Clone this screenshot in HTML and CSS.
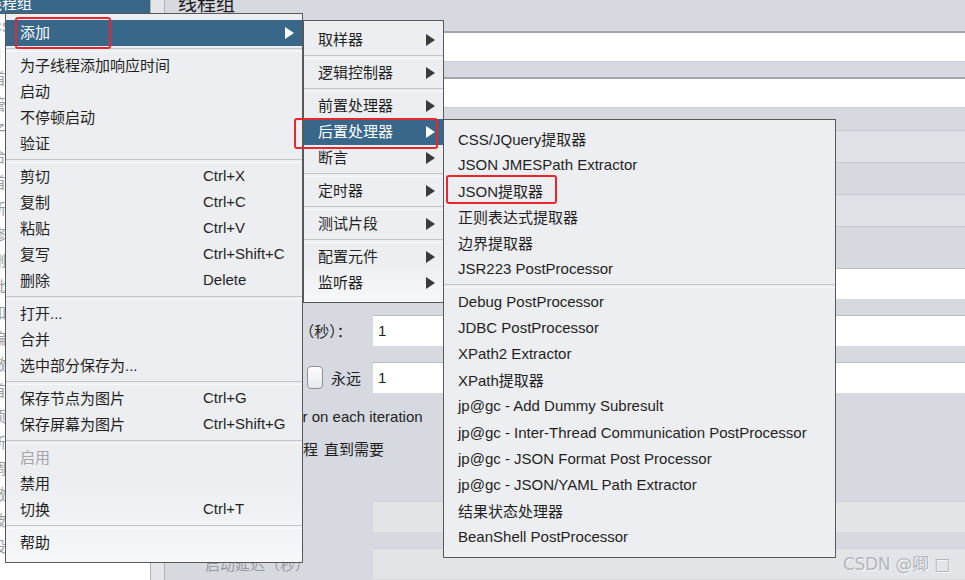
FILE: index.html
```html
<!DOCTYPE html>
<html lang="zh-CN">
<head>
<meta charset="utf-8">
<title>JMeter 线程组</title>
<link rel="stylesheet" href="styles.css">
</head>
<body>
<div class="app">
  <aside class="tree">
    <div class="tree-row selected"><span class="sel-text">线程组</span></div>
    <div class="tree-row">CSS</div>
    <div class="tree-row">□ 线</div>
    <div class="tree-row">首页</div>
    <div class="tree-row">管理</div>
    <div class="tree-row">子项</div>
    <div class="tree-row">合并</div>
    <div class="tree-row">首页</div>
    <div class="tree-row">新增</div>
    <div class="tree-row">修改</div>
    <div class="tree-row">删除</div>
    <div class="tree-row">批量</div>
    <div class="tree-row">加入</div>
    <div class="tree-row">编辑</div>
    <div class="tree-row">撤销</div>
    <div class="tree-row">首页</div>
    <div class="tree-row">项目</div>
    <div class="tree-row">新建</div>
    <div class="tree-row">调试</div>
    <div class="tree-row">撤回</div>
    <div class="tree-row">被真</div>
    <div class="tree-row">设贝</div>
  </aside>
  <div class="splitter"></div>
  <main class="panel">
    <div class="title-row"><h1 class="title">线程组</h1></div>
    <div class="field-row"></div>
    <div class="field-row second"></div>
    <div class="section">
      <div class="band light"></div>
      <div class="band"></div>
      <div class="band light"></div>
      <div class="band"></div>
    </div>
    <div class="props">
      <div class="prow"><span class="plabel">线程数：</span><span class="pfield">10</span></div>
      <div class="prow"><span class="plabel">Ramp-Up时间（秒）：</span><span class="pfield">1</span></div>
      <div class="prow"><span class="plabel split"><span>循环次数</span><span class="cbwrap"><span class="cb"></span><span>永远</span></span></span><span class="pfield">1</span></div>
      <div class="crow first"><span class="cb"></span><span>Same user on each iteration</span></div>
      <div class="crow delay"><span class="cb"></span><span>延迟创建线程<span class="gap">直到需要</span></span></div>
      <div class="crow"><span class="cb"></span><span>调度器</span></div>
      <div class="prow dis"><span class="plabel">持续时间（秒）</span><span class="pfield"></span></div>
      <div class="prow dis"><span class="plabel">启动延迟（秒）</span><span class="pfield"></span></div>
    </div>
  </main>
</div>

<div class="menu main-menu">
  <div class="item hl"><span>添加</span><span class="arrow white"></span></div>
  <div class="sep"></div>
  <div class="item"><span>为子线程添加响应时间</span></div>
  <div class="item"><span>启动</span></div>
  <div class="item"><span>不停顿启动</span></div>
  <div class="item"><span>验证</span></div>
  <div class="sep"></div>
  <div class="item"><span>剪切</span><span class="key">Ctrl+X</span></div>
  <div class="item"><span>复制</span><span class="key">Ctrl+C</span></div>
  <div class="item"><span>粘贴</span><span class="key">Ctrl+V</span></div>
  <div class="item"><span>复写</span><span class="key">Ctrl+Shift+C</span></div>
  <div class="item"><span>删除</span><span class="key">Delete</span></div>
  <div class="sep"></div>
  <div class="item"><span>打开...</span></div>
  <div class="item"><span>合并</span></div>
  <div class="item"><span>选中部分保存为...</span></div>
  <div class="sep"></div>
  <div class="item"><span>保存节点为图片</span><span class="key">Ctrl+G</span></div>
  <div class="item"><span>保存屏幕为图片</span><span class="key">Ctrl+Shift+G</span></div>
  <div class="sep"></div>
  <div class="item disabled"><span>启用</span></div>
  <div class="item"><span>禁用</span></div>
  <div class="item"><span>切换</span><span class="key">Ctrl+T</span></div>
  <div class="sep"></div>
  <div class="item"><span>帮助</span></div>
</div>

<div class="menu sub-menu">
  <div class="item"><span>取样器</span><span class="arrow"></span></div>
  <div class="sep"></div>
  <div class="item"><span>逻辑控制器</span><span class="arrow"></span></div>
  <div class="sep"></div>
  <div class="item"><span>前置处理器</span><span class="arrow"></span></div>
  <div class="item hl"><span>后置处理器</span><span class="arrow white"></span></div>
  <div class="item"><span>断言</span><span class="arrow"></span></div>
  <div class="sep"></div>
  <div class="item"><span>定时器</span><span class="arrow"></span></div>
  <div class="sep"></div>
  <div class="item"><span>测试片段</span><span class="arrow"></span></div>
  <div class="sep"></div>
  <div class="item"><span>配置元件</span><span class="arrow"></span></div>
  <div class="item"><span>监听器</span><span class="arrow"></span></div>
</div>

<div class="menu post-menu">
  <div class="item"><span>CSS/JQuery提取器</span></div>
  <div class="item"><span>JSON JMESPath Extractor</span></div>
  <div class="item"><span>JSON提取器</span></div>
  <div class="item"><span>正则表达式提取器</span></div>
  <div class="item"><span>边界提取器</span></div>
  <div class="item"><span>JSR223 PostProcessor</span></div>
  <div class="sep"></div>
  <div class="item"><span>Debug PostProcessor</span></div>
  <div class="item"><span>JDBC PostProcessor</span></div>
  <div class="item"><span>XPath2 Extractor</span></div>
  <div class="item"><span>XPath提取器</span></div>
  <div class="item"><span>jp@gc - Add Dummy Subresult</span></div>
  <div class="item"><span>jp@gc - Inter-Thread Communication PostProcessor</span></div>
  <div class="item"><span>jp@gc - JSON Format Post Processor</span></div>
  <div class="item"><span>jp@gc - JSON/YAML Path Extractor</span></div>
  <div class="item"><span>结果状态处理器</span></div>
  <div class="item"><span>BeanShell PostProcessor</span></div>
</div>

<div class="mark mark-add"></div>
<div class="mark mark-post"></div>
<div class="mark mark-json"></div>

<div class="watermark">CSDN @卿 □</div>
</body>
</html>
```

FILE: styles.css
```css
* { box-sizing: border-box; }

body {
  margin: 0;
  width: 965px;
  height: 580px;
  overflow: hidden;
  position: relative;
  background: #d6d9e0;
  font-family: "Liberation Sans", "Noto Sans CJK SC", sans-serif;
  font-size: 15px;
  color: #1f1f1f;
}

.app {
  display: flex;
  height: 580px;
}

/* tree (left) */
.tree {
  width: 150px;
  flex-shrink: 0;
  background: #fff;
  overflow: hidden;
}
.tree-row {
  height: 26px;
  line-height: 26px;
  margin-left: -9px;
  color: #9a9b9e;
  white-space: nowrap;
}
.tree-row.selected {
  height: 14px;
  line-height: 8px;
  margin-left: 0;
  background: #39678a;
  color: #fff;
  overflow: hidden;
}
.sel-text {
  display: inline-block;
  margin-left: -13px;
}

.splitter {
  width: 15px;
  flex-shrink: 0;
  background: #e3e5e9;
  border-left: 1px solid #aeb1b6;
  border-right: 1px solid #aeb1b6;
}

/* right panel */
.panel {
  flex: 1;
  display: flex;
  flex-direction: column;
  background: #d6d9e0;
  overflow: hidden;
}
.panel > * { flex-shrink: 0; }
.title-row {
  height: 31px;
  padding-left: 13px;
}
.title {
  margin: -5px 0 0;
  font-size: 19px;
  font-weight: normal;
  line-height: 20px;
  color: #1c1c1c;
}
.field-row {
  height: 31px;
  margin-left: 110px;
  background: #fff;
  border-top: 2px solid #a3a6ab;
  border-bottom: 1px solid #c9ccd1;
}
.field-row.second {
  margin-top: 15px;
}
.section {
  height: 160px;
  display: flex;
  flex-direction: column;
  padding-top: 22px;
}
.band {
  height: 32px;
  flex-shrink: 0;
  border-top: 1px solid #c3c6cb;
}
.band.light {
  background: #dfe1e6;
}

.props {
  display: flex;
  flex-direction: column;
  padding-left: 40px;
}
.props > * { flex-shrink: 0; }
.prow {
  display: flex;
  align-items: center;
  height: 31px;
  margin-bottom: 16px;
}
.plabel {
  width: 168px;
  white-space: nowrap;
}
.plabel.split {
  display: flex;
  justify-content: space-between;
  align-items: center;
  padding-right: 12px;
}
.cbwrap {
  display: flex;
  align-items: center;
  gap: 8px;
}
.pfield {
  flex: 1;
  height: 31px;
  line-height: 30px;
  padding-left: 5px;
  background: #fff;
  border-top: 1px solid #b9bcc1;
}
.prow.dis .plabel { color: #9a9ca1; }
.prow.dis .pfield {
  background: #e2e4e8;
  border-top: 1px solid #cfd2d6;
}
.crow {
  display: flex;
  align-items: center;
  height: 32px;
  gap: 11px;
  white-space: nowrap;
}
.crow.first { margin-top: -9px; margin-left: 3px; }
.crow.delay { margin-left: -4px; }
.crow:last-of-type { margin-bottom: 5px; }
.crow + .prow { margin-top: 5px; }
.gap { margin-left: 6px; }
.cb {
  display: inline-block;
  width: 16px;
  height: 23px;
  border: 1px solid #8e9196;
  border-radius: 4px;
  background: linear-gradient(#fdfdfe, #e6e8ec);
}

/* popup menus */
.menu {
  position: absolute;
  background: linear-gradient(#edeef2 85%, #f6f7f9);
  border: 1px solid #595959;
  padding: 6px 0;
  white-space: nowrap;
}
.main-menu {
  left: 5px;
  top: 13px;
  width: 298px;
}
.sub-menu {
  left: 303px;
  top: 20px;
  width: 141px;
}
.post-menu {
  left: 443px;
  top: 119px;
  width: 393px;
  background: #edeef2;
}
.item {
  height: 26px;
  display: flex;
  align-items: center;
  justify-content: space-between;
  padding: 0 8px 4px 14px;
  color: #1f1f1f;
}
.item .arrow { margin-top: 4px; }
.post-menu .item { height: 26.1px; padding-bottom: 2px; }
.main-menu .item {
  display: grid;
  grid-template-columns: 183px 1fr auto;
}
.main-menu .item .arrow { grid-column: 3; }
.item.hl {
  background: #39678a;
  color: #fff;
}
.item.disabled { color: #a3a5a9; }
.key { color: #1f1f1f; }
.sep {
  height: 7px;
  display: flex;
  align-items: center;
}
.sep::before {
  content: "";
  flex: 1;
  height: 2px;
  border-top: 1px solid #c3c5ca;
  border-bottom: 1px solid #f8f9fa;
}
.arrow {
  width: 0;
  height: 0;
  border-left: 9px solid #3a3a3a;
  border-top: 6px solid transparent;
  border-bottom: 6px solid transparent;
}
.arrow.white { border-left-color: #fff; }

/* red highlight boxes */
.mark {
  position: absolute;
  border: 2px solid #e8262b;
  border-radius: 3px;
}
.mark-add { left: 15px; top: 17px; width: 96px; height: 32px; }
.mark-post { left: 294px; top: 118px; width: 144px; height: 31px; }
.mark-json { left: 446px; top: 175px; width: 111px; height: 29px; }

.watermark {
  position: absolute;
  left: 843px;
  top: 550px;
  font-family: "DejaVu Sans", "Noto Sans CJK SC", sans-serif;
  font-size: 17px;
  color: #b3b6bb;
  text-shadow: 1px 1px 0 #f4f5f7;
  letter-spacing: -0.3px;
}
```
